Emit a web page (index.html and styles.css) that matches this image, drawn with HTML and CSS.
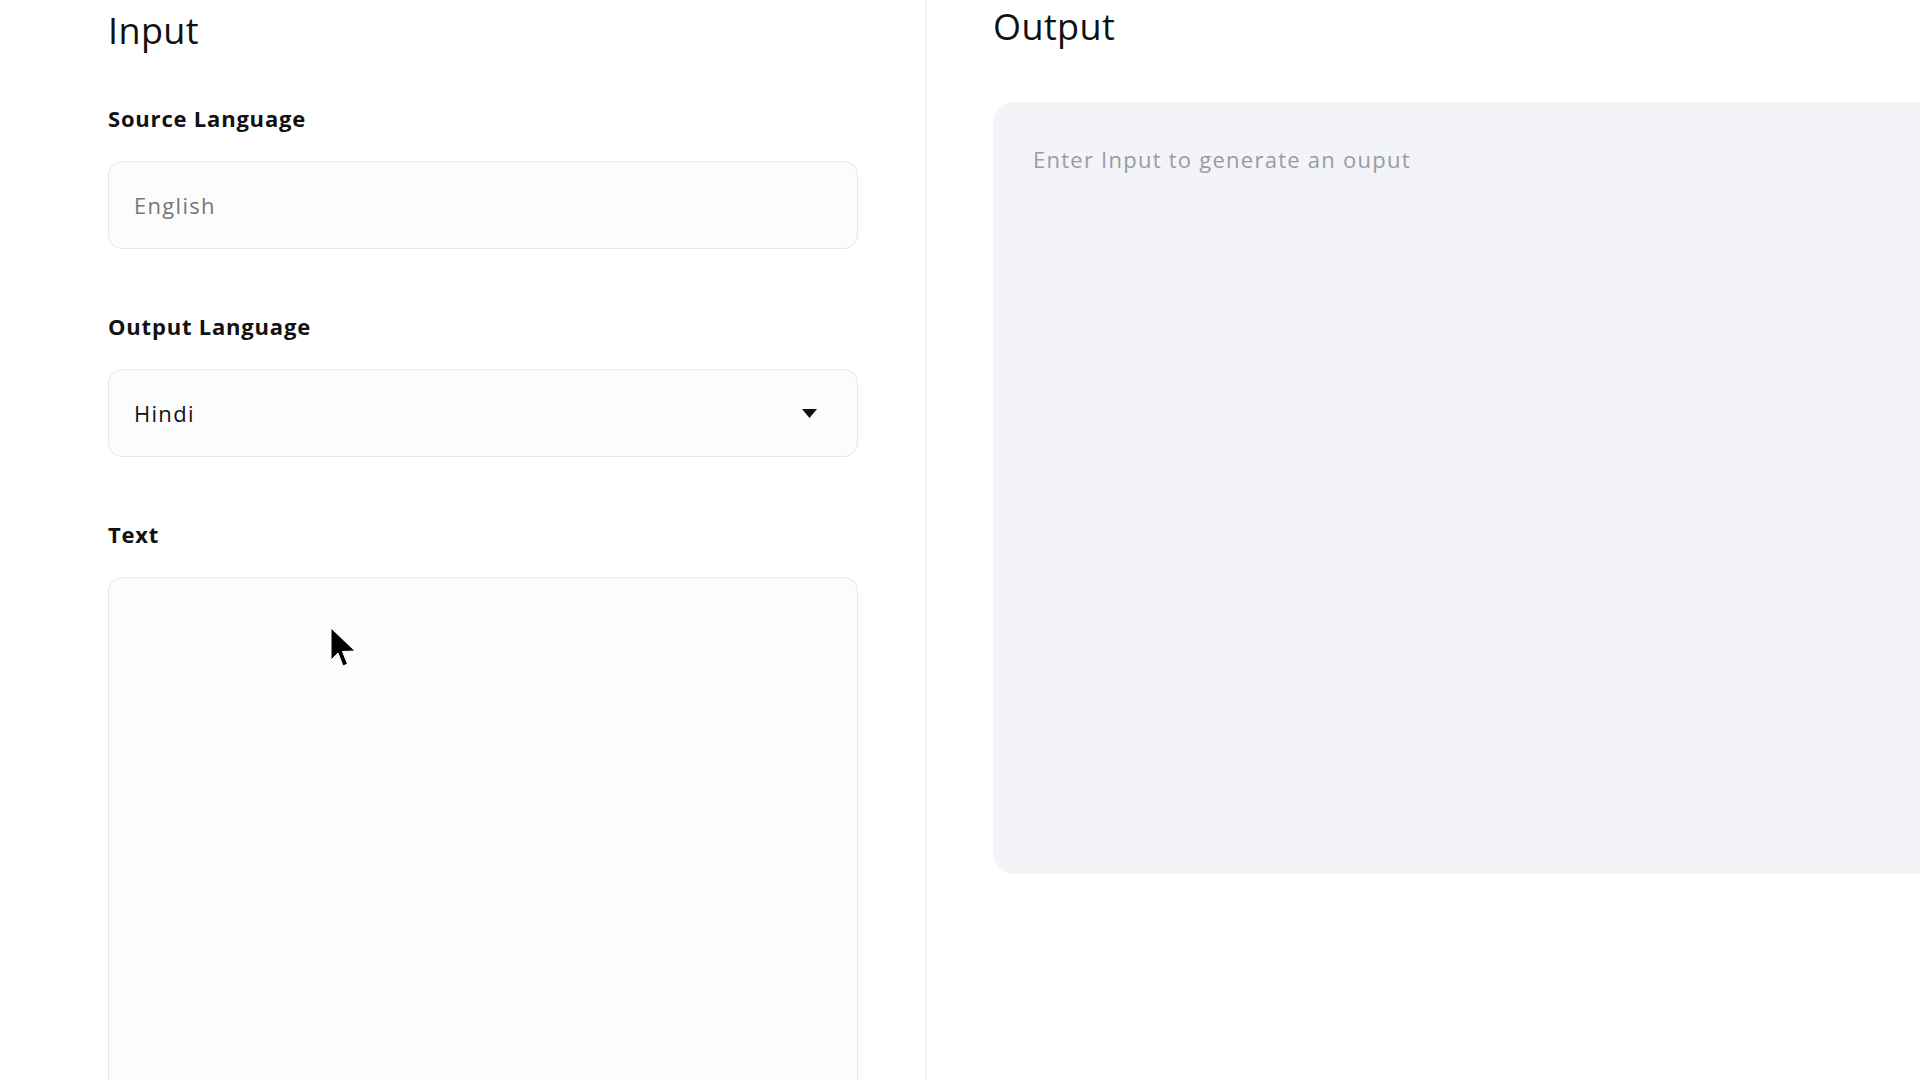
FILE: index.html
```html
<!DOCTYPE html>
<html lang="en">
<head>
<meta charset="utf-8">
<title>Translate</title>
<link rel="stylesheet" href="styles.css">
</head>
<body>
<div class="page">
  <section class="panel panel-input">
    <h1 class="heading heading-input">Input</h1>
    <div class="field">
      <label class="label">Source Language</label>
      <div class="box box-static">English</div>
    </div>
    <div class="field">
      <label class="label">Output Language</label>
      <div class="box box-select">
        <span class="select-value">Hindi</span>
        <svg class="caret" width="15" height="9" viewBox="0 0 15 9"><path d="M0 0 L15 0 L7.5 9 Z" fill="#111"/></svg>
      </div>
    </div>
    <div class="field">
      <label class="label">Text</label>
      <div class="box box-textarea"></div>
    </div>
  </section>
  <section class="panel panel-output">
    <h1 class="heading heading-output">Output</h1>
    <div class="output-box">
      <p class="placeholder">Enter Input to generate an ouput</p>
    </div>
  </section>
</div>
<svg class="cursor" width="28" height="42" viewBox="0 0 28 42"><path d="M1 1 L1 33 L8 26 L13 39 L17.5 37 L12.5 24.5 L25 24 Z" fill="#000" stroke="#fff" stroke-width="1" stroke-linejoin="round"/></svg>
</body>
</html>
```
FILE: styles.css
```css
html, body {
  margin: 0;
  padding: 0;
  background: #ffffff;
  overflow: hidden;
  height: 1080px;
}
body {
  font-family: "Open Sans", "Liberation Sans", sans-serif;
  color: #111;
}
.page {
  display: flex;
  height: 1080px;
  width: 2200px;
}
.panel-input {
  box-sizing: content-box;
  width: 750px;
  padding: 0 67px 0 108px;
  border-right: 2px solid #f2f2f3;
  flex: none;
}
.panel-output {
  padding-left: 66px;
  flex: none;
}
.heading {
  font-size: 36px;
  line-height: 44px;
  font-weight: 400;
  margin: 0;
  letter-spacing: 0.4px;
}
.heading-input {
  padding-top: 9px;
}
.heading-output {
  padding-top: 5px;
}
.field {
  margin-top: 51px;
}
.field + .field {
  margin-top: 63px;
}
.label {
  display: block;
  font-size: 22px;
  line-height: 28px;
  font-weight: 700;
  letter-spacing: 0.8px;
  margin-bottom: 29px;
}
.box {
  box-sizing: border-box;
  height: 88px;
  border: 1.5px solid #e6e6e6;
  border-radius: 14px;
  background: #fcfcfc;
  padding: 0 40px 0 25px;
  display: flex;
  align-items: center;
  font-size: 22px;
  line-height: 28px;
  letter-spacing: 1.3px;
}
.box-static {
  color: #777;
}
.box-select {
  justify-content: space-between;
  color: #111;
}
.caret {
  display: block;
}
.box-textarea {
  height: 600px;
}
.output-box {
  margin-top: 53px;
  width: 1100px;
  height: 772px;
  box-sizing: border-box;
  background: #f3f4f7;
  border-radius: 20px;
  padding: 43px 40px;
}
.placeholder {
  margin: 0;
  font-size: 22px;
  line-height: 28px;
  letter-spacing: 1.25px;
  color: #9a9ba0;
}
.cursor {
  position: absolute;
  left: 330px;
  top: 627px;
}
```
